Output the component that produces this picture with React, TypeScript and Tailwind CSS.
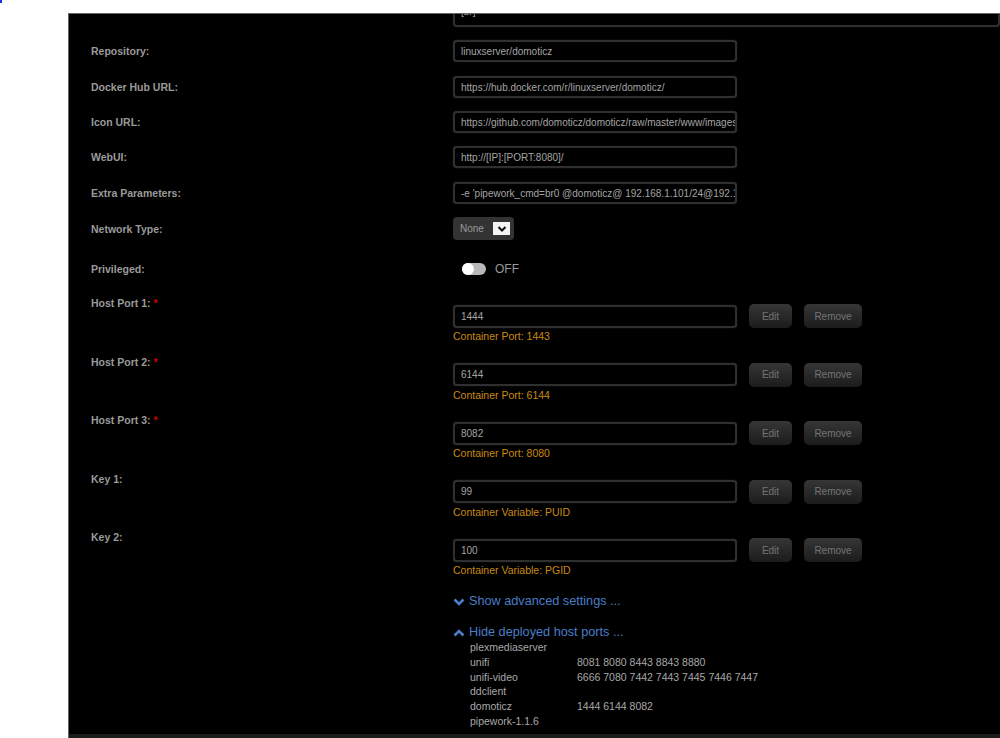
import React from 'react';

const ports = [
  { label: 'Host Port 1:', required: true, value: '1444', note: 'Container Port: 1443' },
  { label: 'Host Port 2:', required: true, value: '6144', note: 'Container Port: 6144' },
  { label: 'Host Port 3:', required: true, value: '8082', note: 'Container Port: 8080' },
  { label: 'Key 1:', required: false, value: '99', note: 'Container Variable: PUID' },
  { label: 'Key 2:', required: false, value: '100', note: 'Container Variable: PGID' },
];

const textFields = [
  { label: 'Repository:', value: 'linuxserver/domoticz', mt: 'mt-[13px]' },
  { label: 'Docker Hub URL:', value: 'https://hub.docker.com/r/linuxserver/domoticz/', mt: 'mt-[14px]' },
  { label: 'Icon URL:', value: 'https://github.com/domoticz/domoticz/raw/master/www/images', mt: 'mt-[13px]' },
  { label: 'WebUI:', value: 'http://[IP]:[PORT:8080]/', mt: 'mt-[13px]' },
  { label: 'Extra Parameters:', value: "-e 'pipework_cmd=br0 @domoticz@ 192.168.1.101/24@192.168.1.1'", mt: 'mt-[14px]' },
];

const deployed = [
  { name: 'plexmediaserver', ports: '' },
  { name: 'unifi', ports: '8081 8080 8443 8843 8880' },
  { name: 'unifi-video', ports: '6666 7080 7442 7443 7445 7446 7447' },
  { name: 'ddclient', ports: '' },
  { name: 'domoticz', ports: '1444 6144 8082' },
  { name: 'pipework-1.1.6', ports: '' },
];

function Label({ children, required }: { children: React.ReactNode; required?: boolean }) {
  return (
    <div className="w-[362px] shrink-0 text-[10.5px] font-bold text-[#9a9a9a] leading-[14px]">
      {children}
      {required && <span className="text-[#cc0000]"> *</span>}
    </div>
  );
}

function TextInput({ value, tall }: { value: string; tall?: boolean }) {
  return (
    <div
      className={
        'w-[284px] flex items-center px-[6px] rounded-[4px] border-2 border-[#2f2f2f] bg-black shadow-[0_0_1px_rgba(255,255,255,0.25)] overflow-hidden whitespace-nowrap text-[10px] text-[#a4a4a4] ' +
        (tall ? 'h-[23px]' : 'h-[22px]')
      }
    >
      {value}
    </div>
  );
}

function Button({ children, w }: { children: React.ReactNode; w: string }) {
  return (
    <div
      className={
        'h-[24px] flex items-center justify-center rounded-[5px] bg-gradient-to-b from-[#363636] to-[#1c1c1c] text-[10px] text-[#747474] ' +
        w
      }
    >
      {children}
    </div>
  );
}

function Chevron({ up }: { up?: boolean }) {
  return (
    <svg width="12" height="12" viewBox="0 0 12 12" className="mr-[4px]">
      <path
        d={up ? 'M1.5 8.5 L6 4 L10.5 8.5' : 'M1.5 3.5 L6 8 L10.5 3.5'}
        fill="none"
        stroke="#4a7ec8"
        strokeWidth="2.6"
      />
    </svg>
  );
}

export default function App() {
  return (
    <div className="w-[1000px] h-[738px] bg-white overflow-hidden relative" style={{ fontFamily: '"Liberation Sans", Arial, sans-serif' }}>
      <div className="absolute left-0 top-0 w-[2px] h-[3px] bg-[#2030e0]" />
      <div className="ml-[68px] mt-[13px] h-[725px] bg-black border-l border-t border-[#666] overflow-hidden flex flex-col">
        <div className="flex-1 pl-[22px]">
          <div className="flex -mt-[9px]">
            <Label>{''}</Label>
            <div className="h-[22px] w-[600px] flex items-end px-[6px] pb-[6px] rounded-[4px] border-2 border-[#2f2f2f] shadow-[0_0_1px_rgba(255,255,255,0.25)] text-[10px] text-[#a4a4a4]">
              [br]
            </div>
          </div>

          {textFields.map((f) => (
            <div key={f.label} className={'flex items-center ' + f.mt}>
              <Label>{f.label}</Label>
              <TextInput value={f.value} />
            </div>
          ))}

          <div className="flex items-center mt-[13px]">
            <Label>Network Type:</Label>
            <div className="w-[61px] h-[23px] rounded-[4px] bg-[#333] flex items-center pl-[7px] pr-[4px] justify-between">
              <span className="text-[10px] text-[#999]">None</span>
              <div className="w-[17px] h-[13px] bg-[#f4f4f4] flex items-center justify-center">
                <svg width="10" height="8" viewBox="0 0 10 8">
                  <path d="M1.5 2 L5 5.5 L8.5 2" fill="none" stroke="#111" strokeWidth="2" />
                </svg>
              </div>
            </div>
          </div>

          <div className="flex items-center h-[22px] mt-[18px]">
            <Label>Privileged:</Label>
            <div className="pl-[9px] flex items-center">
              <div className="w-[24px] h-[12px] rounded-full bg-[#b8b8b8] flex items-center">
                <div className="w-[12px] h-[12px] rounded-full bg-white" />
              </div>
              <span className="ml-[9px] text-[12px] text-[#999]">OFF</span>
            </div>
          </div>

          <div className="mt-[16px]">
            {ports.map((p) => (
              <div key={p.label} className="flex h-[58.5px]">
                <Label required={p.required}>{p.label}</Label>
                <div className="pt-[8px]">
                  <div className="flex items-center">
                    <TextInput value={p.value} tall />
                    <div className="ml-[12px]">
                      <Button w="w-[43px]">Edit</Button>
                    </div>
                    <div className="ml-[12px]">
                      <Button w="w-[58px]">Remove</Button>
                    </div>
                  </div>
                  <div className="mt-[1px] text-[10.5px] leading-[14px] text-[#c98a15]">{p.note}</div>
                </div>
              </div>
            ))}
          </div>

          <div className="pl-[362px] mt-[4px]">
            <div className="flex items-center h-[18px] text-[12.7px] text-[#4a7ec8]">
              <Chevron />
              Show advanced settings ...
            </div>
            <div className="flex items-center h-[18px] mt-[13px] text-[12.7px] text-[#4a7ec8]">
              <Chevron up />
              Hide deployed host ports ...
            </div>
            <div className="pl-[17px] mt-[-1px] text-[10.5px] text-[#a8a8a8]">
              {deployed.map((d) => (
                <div key={d.name} className="flex h-[14.8px] items-center">
                  <span className="w-[107px]">{d.name}</span>
                  <span>{d.ports}</span>
                </div>
              ))}
            </div>
          </div>
        </div>
        <div className="h-[4px] bg-[#1c1c1c]" />
      </div>
    </div>
  );
}
